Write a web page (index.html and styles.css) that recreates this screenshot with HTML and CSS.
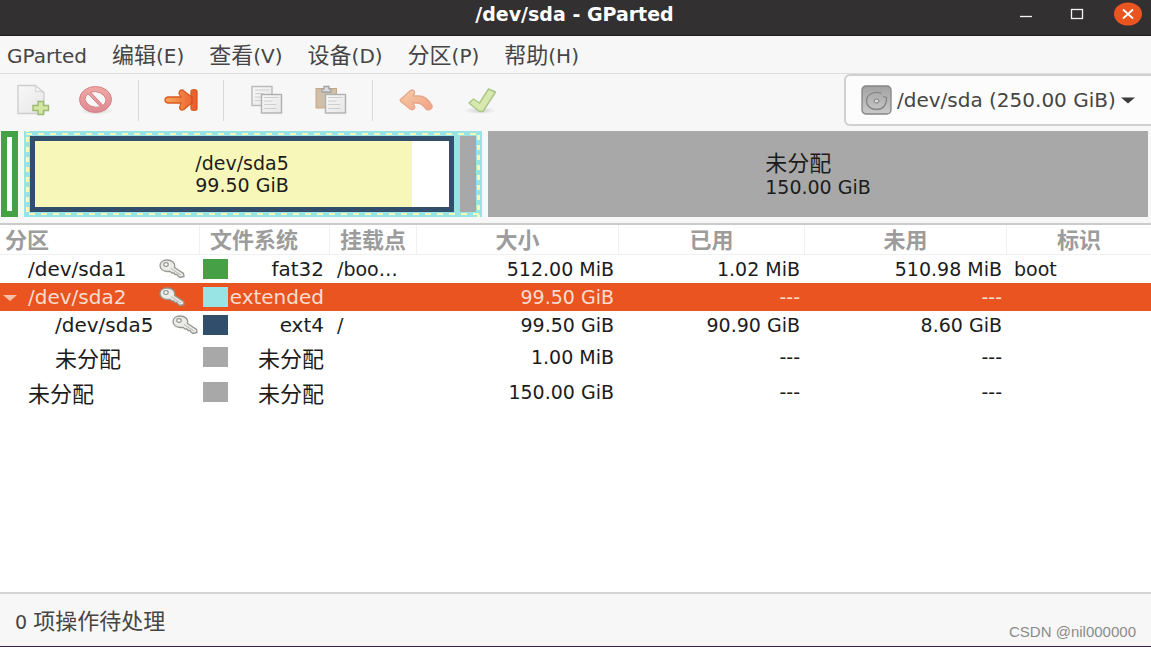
FILE: index.html
```html
<!DOCTYPE html>
<html lang="zh-CN">
<head>
<meta charset="utf-8">
<title>/dev/sda - GParted</title>
<link rel="stylesheet" href="styles.css">
</head>
<body>
<svg class="defs" width="0" height="0" aria-hidden="true">
  <defs>
    <linearGradient id="paper" x1="0" y1="0" x2="1" y2="1"><stop offset="0" stop-color="#f8f8f8"/><stop offset="1" stop-color="#e6e6e6"/></linearGradient>
    <linearGradient id="red" x1="0" y1="0" x2="0" y2="1"><stop offset="0" stop-color="#f0aaa4"/><stop offset="1" stop-color="#dc8a92"/></linearGradient>
    <linearGradient id="orange" x1="0" y1="0" x2="1" y2="0"><stop offset="0" stop-color="#f7a85c"/><stop offset="1" stop-color="#ea5a2a"/></linearGradient>
    <linearGradient id="peach" x1="0" y1="0" x2="1" y2="1"><stop offset="0" stop-color="#f6cfa8"/><stop offset="1" stop-color="#f2a083"/></linearGradient>
    <linearGradient id="metal" x1="0" y1="0" x2="0" y2="1"><stop offset="0" stop-color="#a2a2a2"/><stop offset="1" stop-color="#cacaca"/></linearGradient>
    <radialGradient id="shade"><stop offset="0" stop-color="#cfcfcf"/><stop offset="1" stop-color="#f7f7f7"/></radialGradient>
    <symbol id="key" viewBox="0 0 26 20">
      <path d="M8 1C3.500 1 1 3.500 1 6.500S4 12.500 8 12.500L11 12.300L13 14H15L16 15.500H18L19 17L21 18.500L25 17.500L24.500 14.500L15.500 8.500C16.500 4 13 1 8 1Z" fill="#ebebe8" stroke="#969691" stroke-width="1.300"/>
      <ellipse cx="7" cy="5.500" rx="2.200" ry="1.800" fill="#fff" stroke="#969691" stroke-width="1.200"/>
      <path d="M12 9.500L22 16" stroke="#b5b5b0" fill="none"/>
    </symbol>
  </defs>
</svg>
<div class="window">
  <header class="titlebar">
    <h1 class="title">/dev/sda - GParted</h1>
    <div class="controls">
      <button class="control" aria-label="最小化"><svg width="14" height="14" viewBox="0 0 14 14"><path d="M1 9.500H13" stroke="#f5f5f5" stroke-width="1.300"/></svg></button>
      <button class="control" aria-label="最大化"><svg width="14" height="14" viewBox="0 0 14 14"><rect x="1.500" y="2.500" width="11" height="9" fill="none" stroke="#f5f5f5" stroke-width="1.300"/></svg></button>
      <button class="control" aria-label="关闭"><svg width="30" height="24" viewBox="0 0 30 24"><ellipse cx="15" cy="12" rx="14" ry="11.500" fill="#e95420"/><path d="M10 7.500L20 16.500M20 7.500L10 16.500" stroke="#fff" stroke-width="1.800"/></svg></button>
    </div>
  </header>

  <nav class="menubar">
    <button class="menu">GParted</button>
    <button class="menu"><span class="han">编辑</span>(E)</button>
    <button class="menu"><span class="han">查看</span>(V)</button>
    <button class="menu"><span class="han">设备</span>(D)</button>
    <button class="menu"><span class="han">分区</span>(P)</button>
    <button class="menu"><span class="han">帮助</span>(H)</button>
  </nav>

  <div class="toolbar">
    <div class="tools">
      <button class="tool" aria-label="新建"><svg width="36" height="32" viewBox="0 0 36 32">
        <path d="M4 1.500H21L30 8.500V29.500H4Z" fill="url(#paper)" stroke="#cdcdcd" stroke-width="1.300"/>
        <path d="M21 1.500C23 3 21.500 5 21.500 7.500C25 6.500 28 7.500 30 9Z" fill="#fff" stroke="#cdcdcd"/>
        <path d="M24 17.500H29.500V21.500H34.500V26.500H29.500V30.500H24V26.500H19V21.500H24Z" fill="#d3e6a2" stroke="#9dba72" stroke-width="1.400"/></svg></button>
      <button class="tool" aria-label="删除"><svg width="36" height="32" viewBox="0 0 36 32">
        <ellipse cx="18" cy="27" rx="16" ry="4" fill="url(#shade)"/>
        <path fill-rule="evenodd" d="M1.500 15.500a16 13 0 1 0 32 0a16 13 0 1 0-32 0ZM7 15.500a10.500 8.500 0 0 1 3-5.800L22.500 22.800A12 9.500 0 0 1 7 15.500ZM12.500 8A12 9.500 0 0 1 28 15.500a10.500 8.500 0 0 1-3 6Z" fill="url(#red)" stroke="#d77f86"/></svg></button>
      <span class="divider"></span>
      <button class="tool" aria-label="调整大小/移动"><svg width="36" height="32" viewBox="0 0 36 32">
        <path d="M5 13H18L16 9.500C16 6 19 5 21 7L28 12.500V7.500C28 5 34 5 34 7.500V24.500C34 27 28 27 28 24.500V19.500L21 25.500C18 27 15.500 25 17 22L18 19H5C1 18.500 1 13.500 5 13Z" fill="url(#orange)" stroke="#d95b20" stroke-width="1.300"/>
        <path d="M29 12V20" stroke="#cf3e13"/></svg></button>
      <span class="divider"></span>
      <button class="tool" aria-label="复制"><svg width="36" height="32" viewBox="0 0 36 32">
        <rect x="4" y="2.500" width="20" height="19" fill="url(#paper)" stroke="#b9b9b9" stroke-width="1.400"/>
        <path d="M7 6H21.500M7 9.500H15.500M7 13H19.500M7 16.500H14.500" stroke="#cecece"/>
        <rect x="13.500" y="10.500" width="20" height="18.500" fill="url(#paper)" stroke="#b0b0b0" stroke-width="1.400"/>
        <path d="M16 13.500H30.500M16 17H24.500M16 20.500H28.500M16 24.500H28.500" stroke="#cecece"/></svg></button>
      <button class="tool" aria-label="粘贴"><svg width="36" height="32" viewBox="0 0 36 32">
        <rect x="4" y="4.500" width="20.500" height="19.500" fill="#d4bda0" stroke="#c2a98a"/>
        <rect x="6" y="6.500" width="16" height="15" fill="#cfc0ac"/>
        <path d="M10 8V5H12V2.500H17V5H19V8Z" fill="#ddd" stroke="#a2a2a2" stroke-width="1.300"/>
        <rect x="13.500" y="10.500" width="20" height="18.500" fill="url(#paper)" stroke="#b0b0b0" stroke-width="1.400"/>
        <path d="M16 13.500H30.500M16 17H24.500M16 20.500H28.500M16 24.500H28.500" stroke="#cecece"/></svg></button>
      <span class="divider"></span>
      <button class="tool" aria-label="撤销"><svg width="36" height="32" viewBox="0 0 36 32">
        <path d="M3.500 15.500L13 7C15 5 18 6.500 17.500 9L16.500 12H22C29 12 33 18 35 21.500C36 25 31 27.500 28.500 24.500C26 20.500 23 19 19 19H16L17.500 22C18.500 25.500 15 27 12.500 24.500L4.500 18C3 17 3 16 3.500 15.500Z" fill="url(#peach)" stroke="#e8a68c" stroke-width="1.300"/></svg></button>
      <button class="tool" aria-label="应用"><svg width="36" height="32" viewBox="0 0 36 32">
        <ellipse cx="19" cy="26.500" rx="16" ry="3.500" fill="url(#shade)"/>
        <path d="M8 19L12.500 15L18.500 19L27.500 5L34.500 8L22 27.500H18.500Z" fill="#d9e8ac" stroke="#a9c68a" stroke-width="1.400" stroke-linejoin="round"/></svg></button>
    </div>
    <label class="device">
      <svg width="31" height="30" viewBox="0 0 31 30">
        <rect x="1" y="1" width="29" height="28" rx="4" fill="url(#metal)" stroke="#858585" stroke-width="1.300"/>
        <path d="M20.500 8.500C14 5.500 5.500 9 5.500 16C5.500 21 10 24.500 15.500 24.500C21.500 24.500 26 20.500 25.500 12.500L22 11.500" fill="none" stroke="#858585" stroke-width="1.300"/>
        <ellipse cx="15.500" cy="16" rx="2.500" ry="2" fill="#d8d8d8" stroke="#808080"/></svg>
      <select class="device-select" aria-label="设备"><option>/dev/sda (250.00 GiB)</option></select>
      <svg width="14" height="7" viewBox="0 0 14 7"><path d="M0 0.500H14L7 6.500Z" fill="#3d3d3d"/></svg>
    </label>
  </div>

  <section class="disk">
    <div class="part-sda1"></div>
    <div class="part-extended">
      <div class="part-sda5"><div class="part-label"><span>/dev/sda5</span><span>99.50 GiB</span></div></div>
      <div class="part-gap"></div>
    </div>
    <div class="part-free"><div class="part-label spaced"><span class="han">未分配</span><span>150.00 GiB</span></div></div>
  </section>

  <main class="list">
    <table class="partitions">
      <colgroup><col class="c-name"><col class="c-type"><col class="c-mount"><col class="c-size"><col class="c-used"><col class="c-free"><col></colgroup>
      <thead>
        <tr><th class="first">分区</th><th class="start">文件系统</th><th class="start">挂载点</th><th>大小</th><th>已用</th><th>未用</th><th>标识</th></tr>
      </thead>
      <tbody>
        <tr>
          <td><div class="name">/dev/sda1<svg class="key" width="26" height="20"><use href="#key"/></svg></div></td>
          <td><div class="type"><i class="swatch fat32"></i>fat32</div></td>
          <td>/boo…</td><td class="num">512.00 MiB</td><td class="num">1.02 MiB</td><td class="num">510.98 MiB</td><td>boot</td>
        </tr>
        <tr class="selected">
          <td><div class="name"><svg class="expander" width="14" height="6" viewBox="0 0 14 6"><path d="M0 0H14L7 6Z" fill="#f7c0a6"/></svg>/dev/sda2<svg class="key" width="26" height="20"><use href="#key"/></svg></div></td>
          <td><div class="type"><i class="swatch extended"></i>extended</div></td>
          <td></td><td class="num">99.50 GiB</td><td class="num">---</td><td class="num">---</td><td></td>
        </tr>
        <tr>
          <td><div class="name child">/dev/sda5<svg class="key" width="26" height="20"><use href="#key"/></svg></div></td>
          <td><div class="type"><i class="swatch ext4"></i>ext4</div></td>
          <td>/</td><td class="num">99.50 GiB</td><td class="num">90.90 GiB</td><td class="num">8.60 GiB</td><td></td>
        </tr>
        <tr class="tall">
          <td><div class="name child"><span class="han">未分配</span></div></td>
          <td><div class="type"><i class="swatch free"></i><span class="han">未分配</span></div></td>
          <td></td><td class="num">1.00 MiB</td><td class="num">---</td><td class="num">---</td><td></td>
        </tr>
        <tr class="tall">
          <td><div class="name"><span class="han">未分配</span></div></td>
          <td><div class="type"><i class="swatch free"></i><span class="han">未分配</span></div></td>
          <td></td><td class="num">150.00 GiB</td><td class="num">---</td><td class="num">---</td><td></td>
        </tr>
      </tbody>
    </table>
  </main>

  <footer class="statusbar">
    <span>0 <span class="han">项操作待处理</span></span>
    <span class="credit">CSDN @nil000000</span>
  </footer>
</div>
</body>
</html>
```
FILE: styles.css
```css
* { box-sizing: border-box; }

body {
  margin: 0;
  font-family: "DejaVu Sans", "Noto Sans CJK SC", sans-serif;
  font-size: 19px;
  color: #1c1c1c;
  background: #f7f7f7;
}

button, select {
  margin: 0;
  padding: 0;
  border: 0;
  background: none;
  font: inherit;
  color: inherit;
}

svg { display: block; flex: none; }
.defs { position: absolute; }

.han {
  font-family: "Noto Sans CJK SC", sans-serif;
  font-size: 22px;
  line-height: 1;
}

.window {
  display: flex;
  flex-direction: column;
  min-height: 100vh;
  border-bottom: 1px solid #3f1f40;
}

/* Title bar */
.titlebar {
  display: grid;
  grid-template-columns: 1fr auto 1fr;
  height: 36px;
  padding: 0 8px 8px 6px;
  align-items: center;
  background: #333031;
  border-bottom: 1px solid #1f1d1d;
}
.title {
  grid-column: 2;
  margin: 0;
  font-size: 19px;
  line-height: 26px;
  color: #fff;
}
.controls {
  display: flex;
  justify-content: flex-end;
  align-items: center;
  gap: 37px;
}
.control:last-child { margin-left: -8px; }

/* Menu bar */
.menubar {
  display: flex;
  gap: 25px;
  height: 38px;
  padding: 2px 7px 0;
  align-items: center;
  font-size: 20px;
  line-height: 30px;
  color: #454545;
  border-bottom: 1px solid #dcdcdc;
}

/* Toolbar */
.toolbar {
  display: flex;
  justify-content: space-between;
  height: 52px;
  font-size: 20px;
}
.tools { display: flex; align-items: center; }
.tool {
  display: flex;
  justify-content: center;
  width: 64px;
}
.divider {
  width: 1px;
  height: 41px;
  margin: 0 10px;
  background: #d9d9d9;
}
.device {
  display: flex;
  align-items: center;
  gap: 5px;
  padding: 0 16px 0 15px;
  background: #fcfcfc;
  border: 2px solid #d0d0d0;
  border-right: 0;
  border-radius: 6px 0 0 6px;
  color: #454545;
}
.device-select { appearance: none; line-height: 28px; }

/* Disk map */
.disk {
  display: grid;
  grid-template-columns: 17px 458fr 660fr;
  gap: 6px;
  height: 99px;
  padding: 5px 3px 6px 1px;
  border-bottom: 2px solid #cbcbcb;
}
.part-sda1 {
  background: #fff;
  border: 6px solid #46a046;
}
.part-extended {
  display: flex;
  gap: 6px;
  padding: 5px 6px;
  background-color: #98e4e5;
  background-image:
    linear-gradient(90deg, #f7f7ba 6px, transparent 6px),
    linear-gradient(90deg, #f7f7ba 6px, transparent 6px),
    linear-gradient(#f7f7ba 5px, transparent 5px),
    linear-gradient(#f7f7ba 5px, transparent 5px);
  background-size: 12px 2px, 12px 2px, 3px 10px, 3px 10px;
  background-position: 2px 2px, 5px calc(100% - 2px), 2px 6px, calc(100% - 2px) 4px;
  background-repeat: repeat-x, repeat-x, repeat-y, repeat-y;
}
.part-sda5 {
  display: flex;
  flex: 1;
  align-items: center;
  justify-content: center;
  border: 5px solid #314e6c;
  background: linear-gradient(90deg, #f7f7ba 91%, #fff 91%);
}
.part-gap { width: 16px; background: #a8a8a8; }
.part-free {
  display: flex;
  align-items: center;
  justify-content: center;
  background: #a8a8a8;
}
.part-label { display: grid; line-height: 22px; }
.part-label.spaced { gap: 4px; }

/* Partition list */
.list { flex: 1; background: #fff; }
.partitions {
  width: 100%;
  table-layout: fixed;
  border-collapse: separate;
  border-spacing: 0;
}
.c-name { width: 200px; }
.c-type { width: 130px; }
.c-mount { width: 87px; }
.c-size { width: 202px; }
.c-used { width: 186px; }
.c-free { width: 202px; }
th {
  height: 30px;
  padding: 0 0 3px;
  font: bold 22px/26px "Noto Sans CJK SC", sans-serif;
  color: #9c9c9c;
  border-right: 1px solid #f0f0f0;
  border-bottom: 1px solid #f0f0f0;
}
th:last-child { border-right: 0; }
th.first { padding-left: 5px; text-align: left; }
th.start { padding-left: 10px; text-align: left; }
td {
  height: 28px;
  padding: 0 5px 0 7px;
  line-height: 24px;
  white-space: nowrap;
}
td:nth-child(1) { padding: 0 15px 0 28px; font-size: 20px; }
td:nth-child(2) { padding: 0 6px 0 3px; font-size: 20px; }
.num { text-align: right; }
.tall td { height: 35px; }
.selected td { background: #e95420; color: #fbdccf; }

.name { display: flex; position: relative; align-items: center; }
.name.child { padding-left: 27px; margin-right: -13px; }
.key { margin-left: auto; }
.expander { position: absolute; left: -25px; top: 10px; }
.type { display: flex; align-items: center; justify-content: space-between; }
.swatch { width: 25px; height: 20px; }
.fat32 { background: #46a046; }
.extended { background: #98e4e5; }
.ext4 { background: #314e6c; }
.free { background: #a8a8a8; }

/* Status bar */
.statusbar {
  display: flex;
  align-items: center;
  justify-content: space-between;
  height: 54px;
  padding: 0 15px;
  color: #454545;
  border-top: 2px solid #d3d3d3;
}
.credit {
  align-self: flex-end;
  padding-bottom: 5px;
  font: 15px/18px "Liberation Sans", sans-serif;
  color: #8b8b8b;
}
```
